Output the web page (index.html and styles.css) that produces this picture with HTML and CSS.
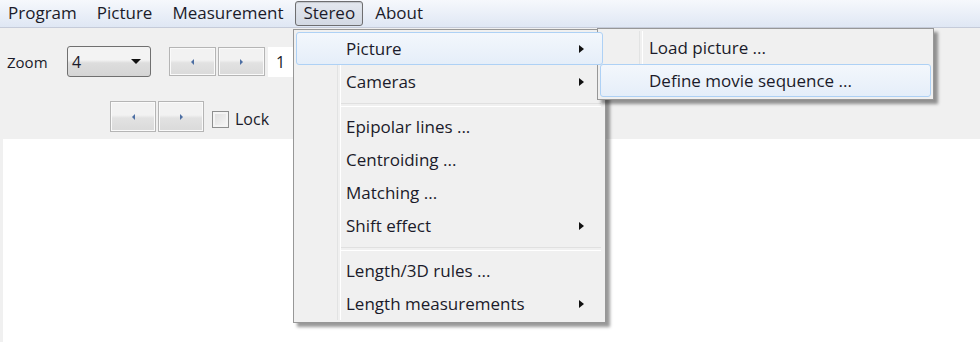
FILE: index.html
```html
<!DOCTYPE html>
<html lang="en">
<head>
  <meta charset="UTF-8">
  <title>Stereo</title>
  <link rel="stylesheet" href="styles.css">
</head>
<body>
  <!-- Barra de menus -->
  <div class="menubar">
    <span class="menubar-item">Program</span>
    <span class="menubar-item">Picture</span>
    <span class="menubar-item">Measurement</span>
    <span class="menubar-item open">Stereo</span>
    <span class="menubar-item">About</span>
  </div>

  <!-- Barra de ferramentas -->
  <div class="toolbar">
    <div class="tool-row first">
      <span class="tool-label">Zoom</span>
      <div class="combo">
        <span>4</span>
        <span class="combo-arrow"></span>
      </div>
      <div class="spin">
        <span class="spin-btn"><span class="tri left"></span></span>
        <span class="spin-btn"><span class="tri right"></span></span>
      </div>
      <div class="field">1</div>
    </div>
    <div class="tool-row second">
      <div class="spin">
        <span class="spin-btn"><span class="tri left"></span></span>
        <span class="spin-btn"><span class="tri right"></span></span>
      </div>
      <label class="check"><span class="box"></span>Lock</label>
    </div>
  </div>

  <div class="canvas"></div>

  <!-- Menu Stereo aberto -->
  <div class="menu stereo-menu">
    <div class="menu-item hot"><span>Picture</span><span class="sub-arrow"></span></div>
    <div class="menu-item"><span>Cameras</span><span class="sub-arrow"></span></div>
    <div class="menu-sep"></div>
    <div class="menu-item"><span>Epipolar lines ...</span></div>
    <div class="menu-item"><span>Centroiding ...</span></div>
    <div class="menu-item"><span>Matching ...</span></div>
    <div class="menu-item"><span>Shift effect</span><span class="sub-arrow"></span></div>
    <div class="menu-sep"></div>
    <div class="menu-item"><span>Length/3D rules ...</span></div>
    <div class="menu-item"><span>Length measurements</span><span class="sub-arrow"></span></div>
  </div>

  <!-- Submenu Picture -->
  <div class="menu picture-menu">
    <div class="menu-item"><span>Load picture ...</span></div>
    <div class="menu-item hot"><span>Define movie sequence ...</span></div>
  </div>
</body>
</html>
```

FILE: styles.css
```css
* {
  box-sizing: border-box;
  margin: 0;
  padding: 0;
}

body {
  width: 980px;
  height: 342px;
  overflow: hidden;
  display: flex;
  flex-direction: column;
  position: relative;
  font-family: 'Open Sans', sans-serif;
  font-size: 17px;
  color: #1b1b2a;
  background: #f0f0f0;
}

/* Barra de menus */
.menubar {
  height: 28px;
  display: flex;
  align-items: center;
  gap: 4px;
  background: linear-gradient(#f6f8fc, #dfe7f4);
  border-bottom: 1px solid #c5cbd9;
}

.menubar-item {
  height: 25px;
  line-height: 22px;
  padding: 0 7px;
  border: 1px solid transparent;
  border-radius: 3px;
}

.menubar-item.open {
  border-color: #6e6e70;
  background: linear-gradient(#e4e8ef, #d3d9e3);
  box-shadow: inset 0 1px 1px rgba(0, 0, 0, 0.15);
}

/* Barra de ferramentas */
.toolbar {
  height: 111px;
  background: #f0f0f0;
}

.tool-row {
  display: flex;
  align-items: center;
}

.tool-row.first {
  padding: 18px 0 0 7px;
}

.tool-row.second {
  padding: 24px 0 0 110px;
}

.tool-label {
  font-size: 15px;
  width: 60px;
}

.combo {
  width: 84px;
  height: 31px;
  display: flex;
  align-items: center;
  justify-content: space-between;
  padding: 0 9px 0 4px;
  border: 1px solid #707070;
  border-radius: 3px;
  background: linear-gradient(#f3f3f3 45%, #dddddd 55%, #d5d5d5);
  margin-right: 18px;
  font-size: 16px;
}

.combo-arrow {
  width: 0;
  height: 0;
  border-left: 5px solid transparent;
  border-right: 5px solid transparent;
  border-top: 5px solid #111;
}

.spin {
  display: flex;
  gap: 2px;
}

.spin-btn {
  width: 47px;
  height: 29px;
  display: flex;
  align-items: center;
  justify-content: center;
  border: 1px solid #b5b5b5;
  background: linear-gradient(#f2f2f2 45%, #e2e2e2 55%, #dadada);
  box-shadow: inset 0 0 0 1px #fafafa;
}

.second .spin-btn {
  width: 46px;
  height: 31px;
}

.tri {
  width: 0;
  height: 0;
  border-top: 3px solid transparent;
  border-bottom: 3px solid transparent;
}

.tri.left {
  border-right: 3px solid #4d6fa3;
}

.tri.right {
  border-left: 3px solid #4d6fa3;
}

.field {
  width: 28px;
  height: 30px;
  margin-left: 3px;
  padding-left: 8px;
  line-height: 30px;
  background: #fff;
  font-size: 16px;
}

.check {
  display: flex;
  align-items: center;
  margin-left: 8px;
  margin-top: 5px;
  font-size: 16px;
}

.check .box {
  width: 17px;
  height: 17px;
  margin-right: 6px;
  border: 1px solid #8e8f8f;
  background: linear-gradient(135deg, #dcdcdc, #f8f8f8);
  box-shadow: inset 0 0 0 2px #f4f4f4;
}

.canvas {
  flex: 1;
  margin-left: 3px;
  background: #fff;
}

/* Menus suspensos */
.menu {
  position: absolute;
  background: #f0f0f0;
  border: 1px solid #979797;
  box-shadow: 4px 4px 3px rgba(0, 0, 0, 0.4);
  padding: 2px;
}

/* coluna de ícones com linha vertical */
.menu::before {
  content: "";
  position: absolute;
  top: 2px;
  bottom: 2px;
  width: 2px;
  border-left: 1px solid #e2e3e3;
  border-right: 1px solid #ffffff;
}

.stereo-menu {
  left: 293px;
  top: 29px;
  width: 313px;
}

.stereo-menu::before {
  left: 43px;
}

.picture-menu {
  left: 597px;
  top: 28px;
  width: 337px;
}

.picture-menu::before {
  left: 41px;
}

.menu-item {
  position: relative;
  height: 33px;
  display: flex;
  align-items: center;
  justify-content: space-between;
  padding: 0 18px 0 49px;
  border: 1px solid transparent;
  border-radius: 3px;
}

.picture-menu .menu-item {
  padding-left: 48px;
}

.menu-item.hot {
  border-color: #aed1f5;
  background: linear-gradient(#f3f7fc, #e5eef9);
  z-index: 1;
}

.menu-sep {
  height: 12px;
  margin-left: 43px;
  position: relative;
}

.menu-sep::after {
  content: "";
  position: absolute;
  left: 2px;
  right: 2px;
  top: 5px;
  height: 2px;
  border-top: 1px solid #e0e0e0;
  border-bottom: 1px solid #ffffff;
}

.sub-arrow {
  width: 0;
  height: 0;
  border-top: 4px solid transparent;
  border-bottom: 4px solid transparent;
  border-left: 5px solid #111;
}
```
